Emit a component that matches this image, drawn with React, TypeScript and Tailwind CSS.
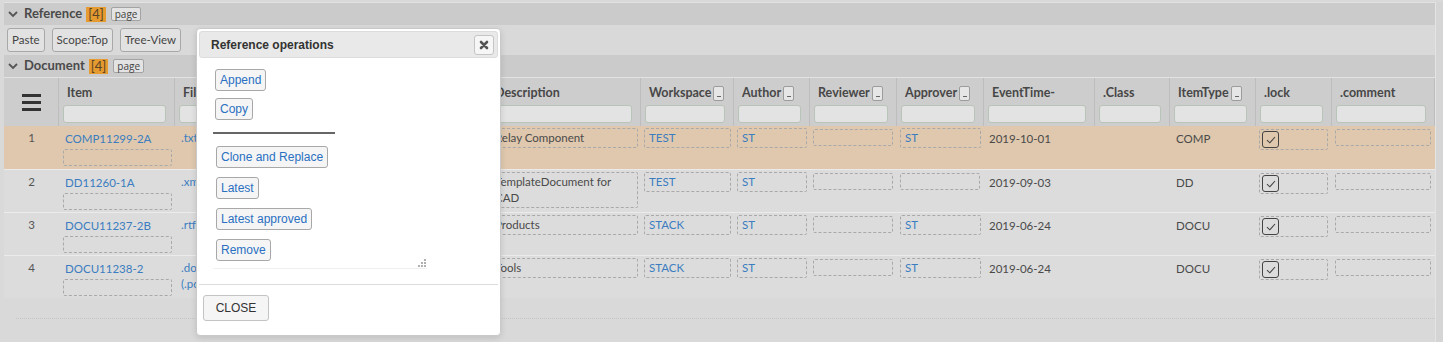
import React from 'react';

type DataRow = {
  n: number;
  item: string;
  file: string[];
  desc: string[];
  workspace: string;
  author: string;
  reviewer?: string;
  approver?: string;
  time: string;
  type: string;
  selected?: boolean;
};

const rows: DataRow[] = [
  { n: 1, item: 'COMP11299-2A', file: ['.txt'], desc: ['Relay Component'], workspace: 'TEST', author: 'ST', approver: 'ST', time: '2019-10-01', type: 'COMP', selected: true },
  { n: 2, item: 'DD11260-1A', file: ['.xml'], desc: ['TemplateDocument for', 'CAD'], workspace: 'TEST', author: 'ST', time: '2019-09-03', type: 'DD' },
  { n: 3, item: 'DOCU11237-2B', file: ['.rtf'], desc: ['Products'], workspace: 'STACK', author: 'ST', approver: 'ST', time: '2019-06-24', type: 'DOCU' },
  { n: 4, item: 'DOCU11238-2', file: ['.docx', '(.pdf)'], desc: ['Tools'], workspace: 'STACK', author: 'ST', approver: 'ST', time: '2019-06-24', type: 'DOCU' },
];

const COLS =
  'grid grid-cols-[55px_116px_312px_154px_93px_76px_87px_87px_111px_75px_86px_76px_103px]';

function Chevron() {
  return (
    <svg width="10" height="7" viewBox="0 0 10 7" className="shrink-0">
      <path d="M1 1l4 4 4-4" stroke="#555" strokeWidth="1.8" fill="none" />
    </svg>
  );
}

function SectionBar({ title }: { title: string }) {
  return (
    <div className="flex h-[22px] items-center bg-[#cbcbcb] pl-[4px]">
      <Chevron />
      <span className="ml-[6px] text-[13px] font-bold text-[#4a4a4a]">{title}</span>
      <span className="ml-[4px] h-[15px] bg-[#e59b30] px-[2px] text-[13px] leading-[15px] text-[#5b4425]">
        [4]
      </span>
      <span className="ml-[5px] h-[14px] rounded-[2px] border border-[#a3a3a3] bg-[#e3e3e3] px-[3px] font-['Open_Sans',sans-serif] text-[10px] leading-[12px] text-[#444]">
        page
      </span>
    </div>
  );
}

function ToolButton({ label }: { label: string }) {
  return (
    <button className="h-[24px] rounded-[3px] border border-[#a8a8a8] bg-[#e2e2e2] px-[4px] text-[11.5px] text-[#444]">
      {label}
    </button>
  );
}

function HeadCell({ label, btn }: { label: string; btn?: boolean }) {
  return (
    <div className="flex flex-col border-r border-[#bdbdbd] pl-[4px] pr-[8px] pt-[4px]">
      <div className="flex h-[22px] items-center pl-[4px]">
        <span className="whitespace-nowrap text-[12.5px] font-bold text-[#474747]">{label}</span>
        {btn && (
          <span className="relative ml-[2px] h-[15px] w-[11px] rounded-[2px] border border-[#9c9c9c] bg-[#e6e6e6]">
            <span className="absolute bottom-[3px] left-[3px] h-px w-[4px] bg-[#666]" />
          </span>
        )}
      </div>
      <div className="mt-[1px] h-[18px] rounded-[3px] border border-[#b8c4b8] bg-[#e3e3e3]" />
    </div>
  );
}

function Dashed({ children, className = '' }: { children?: React.ReactNode; className?: string }) {
  return (
    <div className={`rounded-[2px] border border-dashed border-[#a9a9a9] ${className}`}>{children}</div>
  );
}

function TextBox({ lines, link }: { lines: string[]; link?: boolean }) {
  return (
    <div className="ml-[3px] mr-[3px] mt-[2px]">
      <Dashed className={`px-[4px] py-[1px] leading-[16px] ${link ? 'text-[#3b7dc0]' : ''}`}>
        {lines.map((l) => (
          <div key={l} className="whitespace-nowrap">
            {l}
          </div>
        ))}
      </Dashed>
    </div>
  );
}

function EmptyBox() {
  return (
    <div className="ml-[3px] mr-[4px] mt-[3px]">
      <Dashed className="h-[17px]" />
    </div>
  );
}

function Check() {
  return (
    <div className="flex h-[17px] w-[17px] items-center justify-center rounded-[3px] border-[1.5px] border-[#444]">
      <svg width="10" height="8" viewBox="0 0 10 8">
        <path d="M1 4.2l2.8 2.6L9 1" stroke="#444" strokeWidth="1.1" fill="none" />
      </svg>
    </div>
  );
}

function BodyRow({ r }: { r: DataRow }) {
  return (
    <div
      className={`${COLS} h-[43px] ${r.selected ? 'bg-[#dfc8ad]' : 'border-t border-[#ebebeb] bg-[#dcdcdc]'}`}
    >
      <div className="pt-[3px] text-center text-[#555]">{r.n}</div>
      <div className="ml-[4px] mr-[3px]">
        <div className="mt-[3px] flex h-[20px] items-center pl-[2px] text-[#3b7dc0]">{r.item}</div>
        <Dashed className="h-[17px]" />
      </div>
      <div className="mt-[4px] pl-[6px] leading-[16px] text-[#3b7dc0]">
        {r.file.map((f) => (
          <div key={f}>{f}</div>
        ))}
      </div>
      <TextBox lines={r.desc} />
      <TextBox lines={[r.workspace]} link />
      <TextBox lines={[r.author]} link />
      <EmptyBox />
      {r.approver ? <TextBox lines={[r.approver]} link /> : <EmptyBox />}
      <div className="mt-[3px] flex h-[20px] items-center pl-[5px]">{r.time}</div>
      <div />
      <div className="mt-[3px] flex h-[20px] items-center pl-[6px]">{r.type}</div>
      <div className="ml-[3px] mr-[4px] mt-[3px]">
        <Dashed className="h-[21px] pl-[2px] pt-[1px]">
          <Check />
        </Dashed>
      </div>
      <EmptyBox />
    </div>
  );
}

function OpButton({ label }: { label: string }) {
  return (
    <button className="h-[22px] self-start rounded-[3px] border border-[#a8a8a8] bg-[#f5f5f5] px-[4px] text-[12px] text-[#2a70c2]">
      {label}
    </button>
  );
}

function Grip() {
  return (
    <svg width="8" height="8" viewBox="0 0 8 8" className="absolute bottom-[1px] right-[1px]">
      {[
        [6, 0],
        [6, 3],
        [3, 3],
        [6, 6],
        [3, 6],
        [0, 6],
      ].map(([x, y]) => (
        <rect key={`${x}-${y}`} x={x} y={y} width="2" height="2" fill="#b0b0b0" />
      ))}
    </svg>
  );
}

function OperationsModal() {
  return (
    <div className="absolute left-[196px] top-[28px] flex h-[308px] w-[305px] flex-col rounded-[4px] border border-[#c9c9c9] bg-white p-[2px] font-['Liberation_Sans',Arial,sans-serif] shadow-[0_2px_6px_rgba(0,0,0,0.12)]">
      <div className="flex h-[27px] items-center justify-between rounded-[3px] border border-[#dcdcdc] bg-[#e9e9e9] pl-[11px] pr-[3px]">
        <span className="text-[12px] font-bold text-[#333]">Reference operations</span>
        <button className="flex h-[20px] w-[20px] items-center justify-center rounded-[3px] border border-[#c5c5c5] bg-[#f6f6f6]">
          <svg width="10" height="10" viewBox="0 0 10 10">
            <path d="M2 2L8 8M8 2L2 8" stroke="#555" strokeWidth="2.6" strokeLinecap="round" />
          </svg>
        </button>
      </div>

      <div className="relative ml-[14px] flex h-[211px] w-[214px] flex-col border-b border-[#f0f0f0] pt-[11px]">
        <div className="ml-[2px] flex flex-col gap-[7px]">
          <OpButton label="Append" />
          <OpButton label="Copy" />
        </div>
        <div className="mt-[12px] h-[2px] w-[122px] bg-[#666]" />
        <div className="ml-[3px] mt-[12px] flex flex-col gap-[9px]">
          <OpButton label="Clone and Replace" />
          <OpButton label="Latest" />
          <OpButton label="Latest approved" />
          <OpButton label="Remove" />
        </div>
        <Grip />
      </div>

      <div className="mt-[15px] h-px bg-[#dddddd]" />
      <div className="pl-[4px] pt-[10px]">
        <button className="h-[26px] w-[66px] rounded-[3px] border border-[#c4c4c4] bg-[#f5f5f5] text-[12px] text-[#333]">
          CLOSE
        </button>
      </div>
    </div>
  );
}

export default function App() {
  return (
    <div className="relative h-[342px] w-[1443px] overflow-hidden bg-[#d9d9d9] font-['Lato',sans-serif] text-[11.5px] text-[#4a4a4a]">
      <div className="flex h-full pt-[2px]">
        <div className="w-[4px] shrink-0" />
        <div className="w-[1431px] shrink-0">
          <div className="border-t border-[#e2e2e2]">
            <SectionBar title="Reference" />
          </div>
          <div className="flex h-[30px] gap-[7px] pl-[3px] pt-[3px]">
            <ToolButton label="Paste" />
            <ToolButton label="Scope:Top" />
            <ToolButton label="Tree-View" />
          </div>
          <SectionBar title="Document" />

          <div className={`${COLS} h-[49px] border-t border-[#e2e2e2] bg-[#cdcdcd]`}>
            <div className="flex items-center justify-center border-r border-[#bdbdbd]">
              <svg width="19" height="18" viewBox="0 0 19 18">
                <rect x="0" y="1" width="19" height="3" fill="#333" />
                <rect x="0" y="8" width="19" height="3" fill="#333" />
                <rect x="0" y="15" width="19" height="3" fill="#333" />
              </svg>
            </div>
            <HeadCell label="Item" />
            <HeadCell label="File" />
            <HeadCell label="Description" />
            <HeadCell label="Workspace" btn />
            <HeadCell label="Author" btn />
            <HeadCell label="Reviewer" btn />
            <HeadCell label="Approver" btn />
            <HeadCell label="EventTime-" />
            <HeadCell label=".Class" />
            <HeadCell label="ItemType" btn />
            <HeadCell label=".lock" />
            <HeadCell label=".comment" />
          </div>

          {rows.map((r) => (
            <BodyRow key={r.n} r={r} />
          ))}

          <div className="ml-[12px] mt-[20px] border-t border-dotted border-[#c4c4c4]" />
        </div>
        <div className="flex-1 border-l border-[#e4e4e4] bg-[#d5d5d5]" />
      </div>

      <OperationsModal />
    </div>
  );
}
